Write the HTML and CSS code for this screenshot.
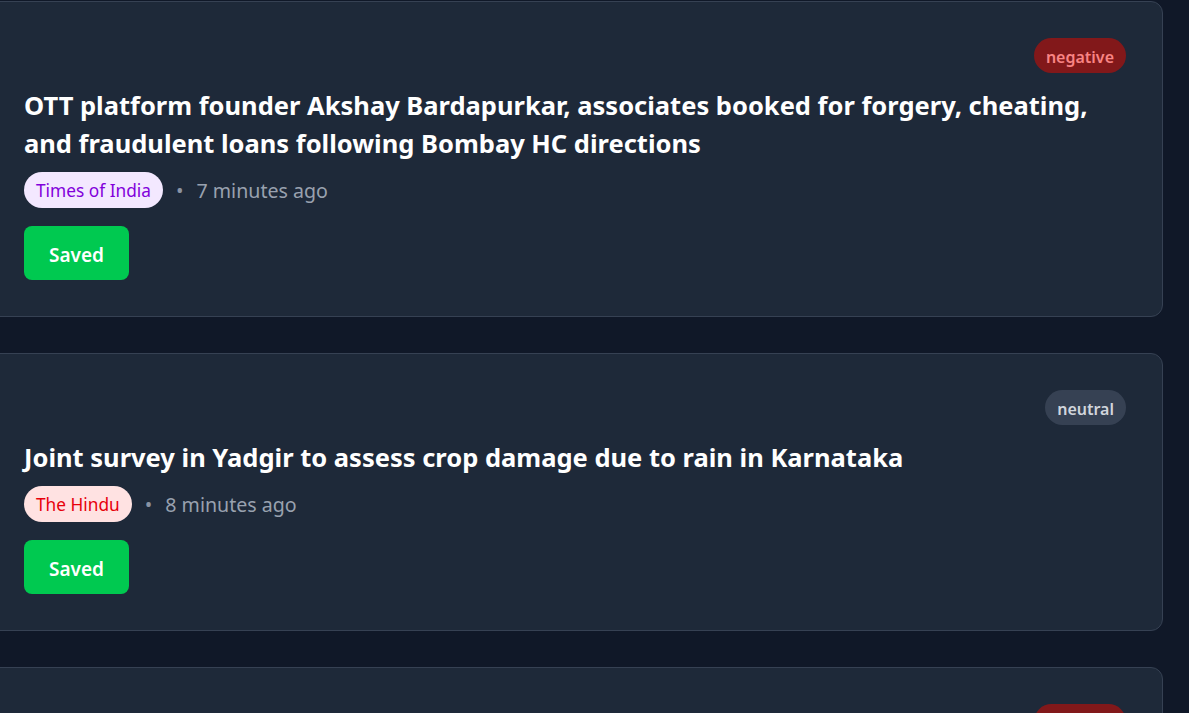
FILE: index.html
```html
<!DOCTYPE html>
<html lang="en">
<head>
<meta charset="utf-8">
<title>News feed</title>
<link rel="stylesheet" href="styles.css">
</head>
<body>
<main class="feed">
  <article class="card">
    <div class="card-top"><span class="sentiment sentiment-negative">negative</span></div>
    <h2 class="title">OTT platform founder Akshay Bardapurkar, associates booked for forgery, cheating, and fraudulent loans following Bombay HC directions</h2>
    <div class="meta">
      <span class="source source-toi">Times of India</span>
      <span class="dot">•</span>
      <span class="time">7 minutes ago</span>
    </div>
    <button class="saved">Saved</button>
  </article>
  <article class="card">
    <div class="card-top"><span class="sentiment sentiment-neutral">neutral</span></div>
    <h2 class="title">Joint survey in Yadgir to assess crop damage due to rain in Karnataka</h2>
    <div class="meta">
      <span class="source source-hindu">The Hindu</span>
      <span class="dot">•</span>
      <span class="time">8 minutes ago</span>
    </div>
    <button class="saved">Saved</button>
  </article>
  <article class="card">
    <div class="card-top"><span class="sentiment sentiment-negative">negative</span></div>
  </article>
</main>
</body>
</html>
```

FILE: styles.css
```css
* { box-sizing: border-box; }
html, body { margin: 0; padding: 0; }
body {
  background: #101828;
  font-family: "Noto Sans", "Open Sans", sans-serif;
  color: #ffffff;
  overflow: hidden;
}
.feed {
  display: flex;
  flex-direction: column;
  gap: 36px;
  margin: 1px 26px 0 -13px;
}
.card {
  background: #1e2939;
  border: 1px solid #364153;
  border-radius: 12px;
  padding: 36px;
  display: flex;
  flex-direction: column;
  align-items: flex-start;
}
.card-top {
  align-self: stretch;
  display: flex;
  justify-content: flex-end;
}
.sentiment {
  display: inline-flex;
  align-items: center;
  height: 35px;
  padding: 2px 12px 0;
  border-radius: 999px;
  font-size: 16px;
  font-weight: 600;
}
.sentiment-negative { background: #82181a; color: #f98484; }
.sentiment-neutral { background: #364153; color: #d1d5dc; }
.title {
  margin: 13px 0 0;
  font-size: 25.5px;
  line-height: 38px;
  font-weight: 700;
  color: #ffffff;
}
.meta {
  margin-top: 10px;
  display: flex;
  align-items: center;
  gap: 13px;
}
.source {
  display: inline-flex;
  align-items: center;
  height: 36px;
  padding: 1px 12px 0;
  border-radius: 999px;
  font-size: 17.3px;
}
.source-toi { background: #f3e8ff; color: #8200db; }
.source-hindu { background: #ffe2e2; color: #e7000b; }
.dot { color: #8a93a3; font-size: 20px; padding-top: 1px; }
.time { color: #99a1af; font-size: 19.6px; padding-top: 1px; }
.saved {
  margin-top: 18px;
  height: 54px;
  padding: 3px 25px 0;
  border: none;
  border-radius: 8px;
  background: #00c950;
  color: #ffffff;
  font-family: inherit;
  font-size: 19px;
  font-weight: 600;
}
```
